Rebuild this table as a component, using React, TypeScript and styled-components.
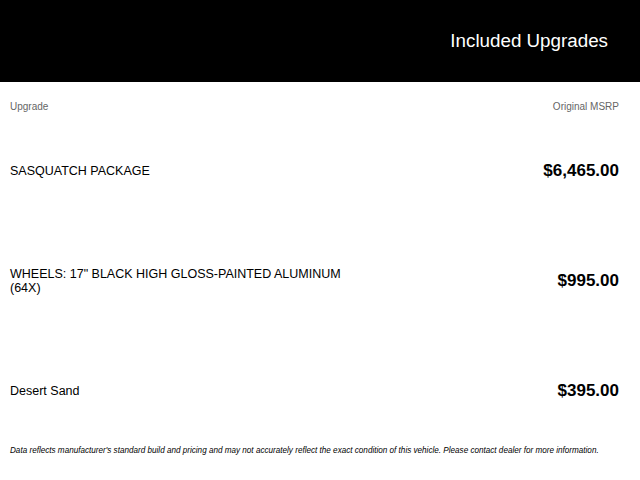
import React from 'react';
import styled, { createGlobalStyle } from 'styled-components';

interface Upgrade {
  name: string;
  msrp: string;
}

const upgrades: Upgrade[] = [
  { name: 'SASQUATCH PACKAGE', msrp: '$6,465.00' },
  { name: 'WHEELS: 17" BLACK HIGH GLOSS-PAINTED ALUMINUM (64X)', msrp: '$995.00' },
  { name: 'Desert Sand', msrp: '$395.00' },
];

const GlobalStyle = createGlobalStyle`
  body {
    margin: 0;
    background: #fff;
    font-family: "Liberation Sans", Arial, sans-serif;
  }
`;

const Page = styled.div`
  width: 640px;
  height: 480px;
  display: flex;
  flex-direction: column;
  overflow: hidden;
`;

const Header = styled.header`
  height: 82px;
  background: #000;
  display: flex;
  align-items: center;
  justify-content: flex-end;
  padding: 0 32px 0 0;
  box-sizing: border-box;
`;

const Title = styled.h1`
  margin: 0;
  color: #fff;
  font-size: 18.8px;
  font-weight: 400;
`;

const Table = styled.div`
  padding: 0 21px 0 10px;
  display: flex;
  flex-direction: column;
`;

const ColumnHeads = styled.div`
  height: 34px;
  padding-top: 19px;
  box-sizing: border-box;
  display: flex;
  justify-content: space-between;
  font-size: 10px;
  line-height: 12px;
  color: #666;
`;

const Row = styled.div`
  height: 110px;
  display: flex;
  align-items: center;
  justify-content: space-between;
`;

const Name = styled.div`
  max-width: 345px;
  font-size: 12.5px;
  line-height: 14px;
  color: #000;
`;

const Price = styled.div`
  font-size: 17px;
  font-weight: 700;
  color: #000;
`;

const Disclaimer = styled.p`
  margin: 0;
  padding: 0 10px;
  font-size: 8.15px;
  line-height: 10px;
  font-style: italic;
  color: #000;
`;

export default function App() {
  return (
    <>
      <GlobalStyle />
      <Page>
        <Header>
          <Title>Included Upgrades</Title>
        </Header>
        <Table>
          <ColumnHeads>
            <span>Upgrade</span>
            <span>Original MSRP</span>
          </ColumnHeads>
          {upgrades.map((u) => (
            <Row key={u.name}>
              <Name>{u.name}</Name>
              <Price>{u.msrp}</Price>
            </Row>
          ))}
        </Table>
        <Disclaimer>
          Data reflects manufacturer's standard build and pricing and may not accurately reflect the exact condition of this vehicle. Please contact dealer for more information.
        </Disclaimer>
      </Page>
    </>
  );
}
